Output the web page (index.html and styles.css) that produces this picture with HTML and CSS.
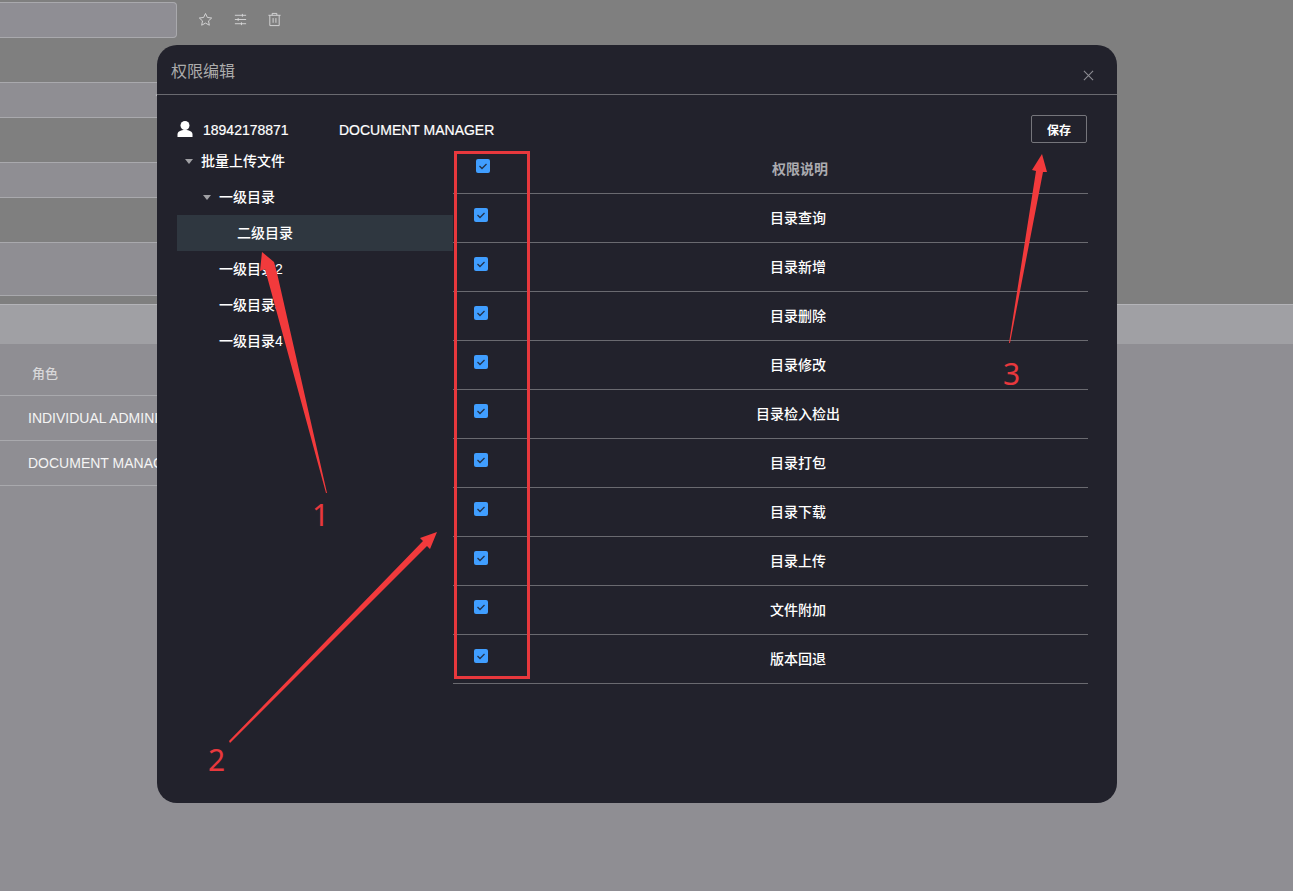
FILE: index.html
```html
<!DOCTYPE html>
<html lang="zh">
<head>
<meta charset="utf-8">
<title>权限编辑</title>
<link rel="stylesheet" href="styles.css">
</head>
<body>
<div class="page">
  <div class="top">
    <div class="search-row">
      <div class="search-input"></div>
      <div class="tools">
        <svg class="tool" viewBox="0 0 16 16"><path d="M8 1.600l2 4.200 4.600.6-3.400 3.100.9 4.600L8 11.800l-4.100 2.300.9-4.600L1.400 6.400l4.600-.6z"/></svg>
        <svg class="tool" viewBox="0 0 16 16"><path d="M2 3.500h12M2 8h12M2 12.500h12M10 2v3M5.500 6.500v3M9 11v3"/></svg>
        <svg class="tool" viewBox="0 0 16 16"><path d="M1.500 3.500h13M5.500 3.500V1.500h5v2M3 3.500V14.500h10V3.500M6.500 6.500v5M9.500 6.500v5"/></svg>
      </div>
    </div>
    <div class="field field-36"></div>
    <div class="field field-35"></div>
    <div class="field field-53"></div>
  </div>
  <div class="table-head"></div>
  <div class="list">
    <div class="list-row list-title">角色</div>
    <div class="list-row list-item">INDIVIDUAL ADMINISTRATOR</div>
    <div class="list-row list-item">DOCUMENT MANAGER</div>
  </div>
</div>

<section class="dialog">
  <header class="dialog-head">
    <h2 class="dialog-title">权限编辑</h2>
    <svg class="close" viewBox="0 0 12 12"><path d="M1 1l10 10M11 1L1 11"/></svg>
  </header>
  <div class="dialog-body">
    <div class="user-row">
      <svg class="user-icon" viewBox="0 0 16 16"><circle cx="8" cy="4.500" r="4.500"/><path d="M0.500 16v-2.500c0-3 3-4.500 7.500-4.500s7.500 1.500 7.500 4.500V16z"/></svg>
      <span class="user-id">18942178871</span>
      <span class="user-role">DOCUMENT MANAGER</span>
      <button class="save">保存</button>
    </div>
    <div class="columns">
      <ul class="tree">
        <li class="node lv1"><i class="caret"></i>批量上传文件</li>
        <li class="node lv2"><i class="caret"></i>一级目录</li>
        <li class="node lv3 selected">二级目录</li>
        <li class="node lv2 leaf">一级目录2</li>
        <li class="node lv2 leaf">一级目录3</li>
        <li class="node lv2 leaf">一级目录4</li>
      </ul>
      <div class="perms">
        <div class="perm perm-head"><span class="box"><svg viewBox="0 0 14 14"><path d="M3.500 7l2.500 2.500 4.500-4.500"/></svg></span><span class="perm-name">权限说明</span></div>
        <div class="perm"><span class="box"><svg viewBox="0 0 14 14"><path d="M3.500 7l2.500 2.500 4.500-4.500"/></svg></span><span class="perm-name">目录查询</span></div>
        <div class="perm"><span class="box"><svg viewBox="0 0 14 14"><path d="M3.500 7l2.500 2.500 4.500-4.500"/></svg></span><span class="perm-name">目录新增</span></div>
        <div class="perm"><span class="box"><svg viewBox="0 0 14 14"><path d="M3.500 7l2.500 2.500 4.500-4.500"/></svg></span><span class="perm-name">目录删除</span></div>
        <div class="perm"><span class="box"><svg viewBox="0 0 14 14"><path d="M3.500 7l2.500 2.500 4.500-4.500"/></svg></span><span class="perm-name">目录修改</span></div>
        <div class="perm"><span class="box"><svg viewBox="0 0 14 14"><path d="M3.500 7l2.500 2.500 4.500-4.500"/></svg></span><span class="perm-name">目录检入检出</span></div>
        <div class="perm"><span class="box"><svg viewBox="0 0 14 14"><path d="M3.500 7l2.500 2.500 4.500-4.500"/></svg></span><span class="perm-name">目录打包</span></div>
        <div class="perm"><span class="box"><svg viewBox="0 0 14 14"><path d="M3.500 7l2.500 2.500 4.500-4.500"/></svg></span><span class="perm-name">目录下载</span></div>
        <div class="perm"><span class="box"><svg viewBox="0 0 14 14"><path d="M3.500 7l2.500 2.500 4.500-4.500"/></svg></span><span class="perm-name">目录上传</span></div>
        <div class="perm"><span class="box"><svg viewBox="0 0 14 14"><path d="M3.500 7l2.500 2.500 4.500-4.500"/></svg></span><span class="perm-name">文件附加</span></div>
        <div class="perm"><span class="box"><svg viewBox="0 0 14 14"><path d="M3.500 7l2.500 2.500 4.500-4.500"/></svg></span><span class="perm-name">版本回退</span></div>
      </div>
    </div>
  </div>
</section>

<svg class="marks" viewBox="0 0 1293 891">
  <rect class="mark-box" x="455.500" y="152.500" width="73" height="525"/>
  <polygon class="arrow" points="327,493 277,273 274,262 262,252 260,271 265,269 326,493"/>
  <polygon class="arrow" points="229,741 423,541 420,538 437,532 430,549 427,546 230,743"/>
  <polygon class="arrow" points="1010,343 1043,172 1047,172 1042,154 1032,170 1036,171 1009,343"/>
</svg>
<span class="num num-1">1</span>
<span class="num num-2">2</span>
<span class="num num-3">3</span>
</body>
</html>
```
FILE: styles.css
```css
* { box-sizing: border-box; }
html, body { margin: 0; padding: 0; }
body {
  width: 1293px;
  height: 891px;
  overflow: hidden;
  background: #8f8e93;
  font-family: "Liberation Sans", "Noto Sans CJK SC", sans-serif;
  font-size: 14px;
  position: relative;
}
.page { display: flex; flex-direction: column; height: 891px; }
.top {
  height: 304px;
  background: #7f7f7f;
  padding-top: 2px;
  display: flex;
  flex-direction: column;
  align-items: flex-start;
  flex: none;
}
.search-row { height: 36px; display: flex; align-items: flex-start; }
.search-input {
  width: 177px;
  height: 36px;
  background: #8f8e94;
  border: 1px solid #a9a9ad;
  border-left: 0;
  border-radius: 0 4px 4px 0;
}
.tools { display: flex; gap: 19.5px; margin: 10px 0 0 21px; }
.tool { width: 15px; height: 15px; fill: none; stroke: #d6d6d8; stroke-width: 1; }
.field {
  width: 160px;
  background: #8f8e93;
  border-top: 1px solid #a9a9ad;
  border-bottom: 1px solid #a9a9ad;
  position: relative;
}
.field-36 { height: 36px; margin-top: 44px; }
.field-35 { height: 36px; margin-top: 44px; }
.field-53 { height: 54px; margin-top: 44px; }
.field-36::after {
  content: "";
  position: absolute;
  right: 2px;
  top: 12px;
  width: 4px;
  height: 4px;
  border-top: 1px solid #c8c8cc;
  transform: rotate(45deg);
}
.table-head { height: 40px; flex: none; background: #a0a0a4; border-top: 1px solid #b4b4b8; }
.list { flex: 1; width: 160px; }
.list-row { border-bottom: 1px solid #a9a9ad; white-space: nowrap; display: flex; align-items: center; }
.list-title { height: 52px; padding: 6px 0 0 32px; font-size: 13px; color: #d8d8da; font-weight: 500; }
.list-item { height: 45px; padding-left: 28px; color: #f4f4f4; }

.dialog {
  position: absolute;
  left: 157px;
  top: 45px;
  width: 960px;
  height: 758px;
  background: #22222c;
  border-radius: 20px;
  color: #fff;
  display: flex;
  flex-direction: column;
}
.dialog-head {
  height: 50px;
  flex: none;
  border-bottom: 1px solid #6a6a70;
  display: flex;
  align-items: center;
  justify-content: space-between;
  padding: 0 23px 0 14px;
}
.dialog-title { margin: 0; font-size: 16px; font-weight: 400; color: #ababab; }
.close { width: 11px; height: 11px; fill: none; stroke: #8c8c92; stroke-width: 1.200; margin-top: 11px; }
.dialog-body { padding: 20px 29px 0 20px; }
.user-row { height: 28px; display: flex; align-items: center; padding-right: 1px; }
.user-icon { width: 16px; height: 16px; fill: #fff; margin: 0 10px 0 0; flex: none; }
.user-id { width: 136px; position: relative; top: 1px; -webkit-text-stroke: .2px #fff; }
.user-role { flex: 1; position: relative; top: 1px; -webkit-text-stroke: .2px #fff; }
.save {
  width: 56px;
  height: 28px;
  background: transparent;
  border: 1px solid #75757b;
  border-radius: 2px;
  color: #fff;
  font: 700 12px "Liberation Sans", "Noto Sans CJK SC", sans-serif;
  padding: 0;
}
.columns { display: flex; align-items: flex-start; }
.tree { list-style: none; margin: 0; padding: 0; width: 276px; flex: none; font-weight: 500; }
.node { height: 36px; padding-bottom: 2px; display: flex; align-items: center; position: relative; color: #fff; }
.lv1 { padding-left: 24px; }
.lv2 { padding-left: 42px; }
.lv3 { padding-left: 60px; }
.selected { background: #2f3740; }
.caret {
  position: absolute;
  top: 16px;
  width: 0;
  height: 0;
  border: 4px solid transparent;
  border-top: 5px solid #a0a0a4;
  border-bottom: 0;
}
.lv1 .caret { left: 8px; }
.lv2 .caret { left: 26px; }
.perms { width: 635px; margin-top: 2px; }
.perm {
  height: 49px;
  display: flex;
  border-bottom: 1px solid #6a6a70;
}
.box {
  width: 14px;
  height: 14px;
  margin: 14px 20px 0 21px;
  background: #409eff;
  border-radius: 2px;
  flex: none;
}
.box svg { display: block; width: 14px; height: 14px; fill: none; stroke: #22324a; stroke-width: 1.300; }
.perm-name { flex: 1; text-align: center; line-height: 48px; font-weight: 500; }
.perm-head .box { margin-left: 23px; margin-right: 22px; }
.perm-head .perm-name { color: #ababb0; font-weight: 700; }

.marks { position: absolute; left: 0; top: 0; width: 1293px; height: 891px; pointer-events: none; }
.mark-box { fill: none; stroke: #e8383d; stroke-width: 3; }
.arrow { fill: #f23a3c; }
.num {
  position: absolute;
  font-family: "Noto Sans", sans-serif;
  font-size: 30px;
  line-height: 30px;
  color: #e8383d;
}
.num-1 { left: 312px; top: 500px; }
.num-2 { left: 208px; top: 745px; }
.num-3 { left: 1003px; top: 359px; }
```
